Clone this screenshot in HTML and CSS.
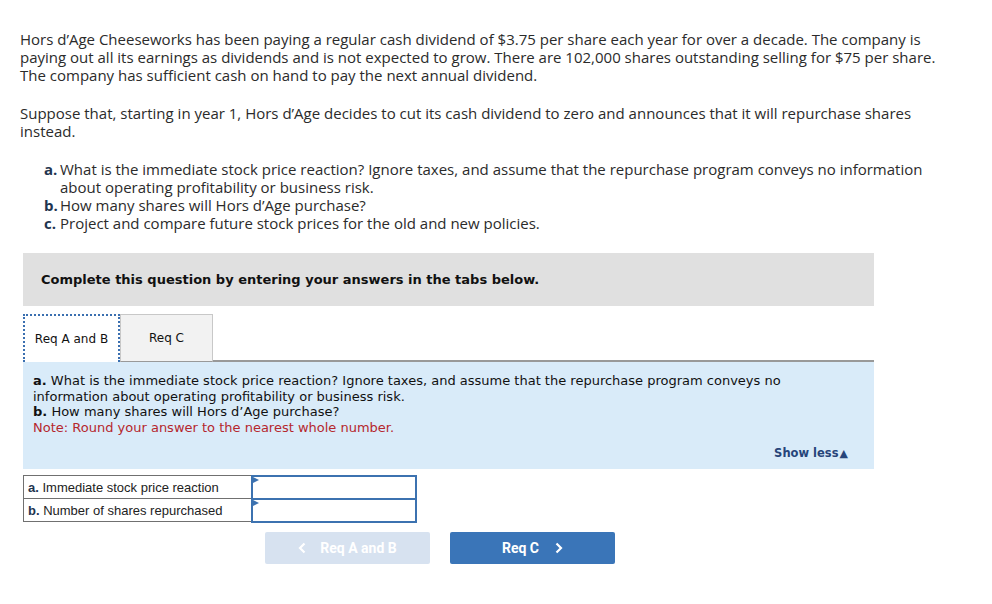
FILE: index.html
```html
<!DOCTYPE html>
<html>
<head>
<meta charset="utf-8">
<link rel="stylesheet" href="styles.css">
</head>
<body>
<div class="page">
  <div class="intro">
    <p>Hors d’Age Cheeseworks has been paying a regular cash dividend of $3.75 per share each year for over a decade. The company is paying out all its earnings as dividends and is not expected to grow. There are 102,000 shares outstanding selling for $75 per share. The company has sufficient cash on hand to pay the next annual dividend.</p>
    <p>Suppose that, starting in year 1, Hors d’Age decides to cut its cash dividend to zero and announces that it will repurchase shares instead.</p>
    <ol class="qlist">
      <li><b>a.</b><span>What is the immediate stock price reaction? Ignore taxes, and assume that the repurchase program conveys no information about operating profitability or business risk.</span></li>
      <li><b>b.</b><span>How many shares will Hors d’Age purchase?</span></li>
      <li><b>c.</b><span>Project and compare future stock prices for the old and new policies.</span></li>
    </ol>
  </div>

  <div class="work">
    <div class="banner">Complete this question by entering your answers in the tabs below.</div>
    <div class="tabs">
      <div class="tab active">Req A and B</div>
      <div class="tab">Req C</div>
      <div class="tabline"></div>
    </div>
    <div class="panel">
      <div class="ptext">
        <p class="pl"><b>a.</b> What is the immediate stock price reaction? Ignore taxes, and assume that the repurchase program conveys no information about operating profitability or business risk.</p>
        <p class="pl"><b>b.</b> How many shares will Hors d’Age purchase?</p>
        <p class="pl note">Note: Round your answer to the nearest whole number.</p>
      </div>
      <div class="showless">Show less<span class="tri">▲</span></div>
    </div>
    <table class="answers">
      <tr><td class="lbl"><b>a.</b> Immediate stock price reaction</td><td class="inp"><span class="flag"></span></td></tr>
      <tr><td class="lbl"><b>b.</b> Number of shares repurchased</td><td class="inp"><span class="flag"></span></td></tr>
    </table>
    <div class="nav">
      <div class="btn prev"><svg class="chev left" width="8" height="12" viewBox="0 0 8 12"><path d="M6.5 1.5 L2 6 L6.5 10.5" fill="none" stroke="#fff" stroke-width="2.2"/></svg>Req A and B</div>
      <div class="btn next">Req C<svg class="chev right" width="8" height="12" viewBox="0 0 8 12"><path d="M1.5 1.5 L6 6 L1.5 10.5" fill="none" stroke="#fff" stroke-width="2.2"/></svg></div>
    </div>
  </div>
</div>
</body>
</html>
```
FILE: styles.css
```css
* { box-sizing: border-box; }
body { margin: 0; background: #fff; }
.page { padding: 30px 0 0 20px; width: 970px; }
.intro { font-family: "Open Sans", sans-serif; font-size: 15px; line-height: 18px; color: #2b2b2b; padding-right: 20px; }
.intro p { margin: 0 0 20px 0; }
.qlist { list-style: none; margin: 18px 0 0 0; padding: 0 0 0 24px; }
.qlist li { display: flex; }
.qlist li b { width: 16px; flex: none; font-weight: 700; color: #1f3550; }
.work { margin-top: 21px; margin-left: 3px; width: 851px; }
.banner { background: #e0e0e0; height: 53px; display: flex; align-items: center; padding-left: 18px; font-family: "DejaVu Sans", Verdana, sans-serif; font-weight: 700; font-size: 13px; color: #111; }
.tabs { display: flex; margin-top: 8px; height: 48px; align-items: stretch; }
.tab { font-family: "DejaVu Sans", Verdana, sans-serif; font-size: 12px; color: #111; display: flex; align-items: center; justify-content: center; }
.tab.active { width: 97px; background: #fff; border: 2px dotted #3a6fb0; border-bottom: none; }
.tab:not(.active) { width: 93px; background: #f2f2f2; border: 1px solid #c8c8c8; border-bottom: 1px solid #999; }
.tabline { flex: 1; border-bottom: 2px solid #999; }
.panel { background: #d9ebf9; padding: 11px 10px 7px 10px; font-family: "DejaVu Sans", Verdana, sans-serif; font-size: 13px; line-height: 15.7px; color: #111; }
.ptext { padding-right: 70px; }
.pl { margin: 0; }
.ptext b { font-weight: 700; }
.note { color: #b5272d; }
.showless { text-align: right; margin-top: 10px; padding-right: 16px; font-weight: 700; font-size: 11.5px; color: #27457a; }
.tri { font-size: 11px; margin-left: 1px; }
.answers { margin-top: 6px; border-collapse: collapse; font-family: "Liberation Sans", Arial, sans-serif; font-size: 13px; color: #222; }
.answers td { border: 1px solid #707070; height: 23px; padding: 0; }
.lbl { width: 228px; padding-left: 4px !important; }
.lbl b { color: #1f3550; }
.inp { width: 164px; border: 2px solid #3c72b0 !important; position: relative; background: #fff; }
.flag { position: absolute; left: 0; top: 0; width: 0; height: 0; border-top: 3px solid transparent; border-bottom: 3px solid transparent; border-left: 6px solid #3c72b0; }
.nav { display: flex; gap: 20px; margin-top: 9px; margin-left: 242px; }
.btn { width: 165px; height: 32px; border-radius: 2px; display: flex; align-items: center; justify-content: center; font-family: Roboto, sans-serif; font-weight: 700; font-size: 14px; color: #fff; }
.btn.prev { background: #d7e2f0; }
.btn.next { background: #3a75b8; }
.chev.left { margin-right: 14px; }
.chev.right { margin-left: 16px; }
```
